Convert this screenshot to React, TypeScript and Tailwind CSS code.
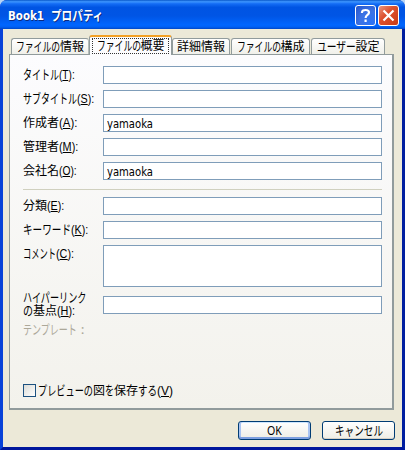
import { useLayoutEffect, useRef, useState } from "react";
import type { ReactNode } from "react";

// Text squeezed or stretched horizontally so that it occupies exactly w pixels.
function Fit({ w, children }: { w: number; children: ReactNode }) {
  const ref = useRef<HTMLSpanElement>(null);
  const [scale, setScale] = useState(1);
  useLayoutEffect(() => {
    if (ref.current) setScale(w / ref.current.offsetWidth);
  }, [w]);
  return (
    <span className="inline-flex shrink-0 whitespace-pre" style={{ width: w }}>
      <span ref={ref} className="block shrink-0 origin-left" style={{ transform: `scaleX(${scale})` }}>
        {children}
      </span>
    </span>
  );
}

type Run = [string, number];

const isKana = (t: string) => /^[\u3040-\u30ff]+$/.test(t);

function Runs({ runs }: { runs: Run[] }) {
  return (
    <span className="flex items-center">
      {runs.map(([t, w], i) => (
        <span key={i} className={isKana(t) ? "-mt-px mb-px flex text-[13px]" : "flex"}>
          <Fit w={w}>{t}</Fit>
        </span>
      ))}
    </span>
  );
}

function Key({ k, w, colon = true }: { k: string; w: number; colon?: boolean }) {
  return (
    <span className="flex font-['Liberation_Sans',sans-serif]">
      <Fit w={w}>
        (<span className="inline-block h-[13px] border-b border-black leading-[14px]">{k}</span>){colon ? ":" : ""}
      </Fit>
    </span>
  );
}

function Row({ runs, k, kw, value, tall }: { runs: Run[]; k: string; kw: number; value?: string; tall?: boolean }) {
  return (
    <div className="flex">
      <div className="flex h-[18px] w-20 shrink-0 items-center">
        <Runs runs={runs} />
        <Key k={k} w={kw} />
      </div>
      <div className={`flex w-[279px] items-center border border-[#7f9db9] bg-white pt-px pl-[3px] font-['DejaVu_Sans',sans-serif] text-[12px] ${tall ? "h-[42px]" : "h-[18px]"}`}>
        {value && <Fit w={46}>{value}</Fit>}
      </div>
    </div>
  );
}

function Tab({ runs, className }: { runs: Run[]; className: string }) {
  return (
    <div className={`flex h-4 shrink-0 items-center justify-center rounded-t-[3px] border border-b-0 border-[#919b9c] bg-linear-to-b from-white to-[#f0f0ea] pt-px ${className}`}>
      <Runs runs={runs} />
    </div>
  );
}

export default function App() {
  return (
    <div className="flex h-[450px] w-[405px] flex-col overflow-hidden bg-[#b7d4f5] font-['Noto_Sans','Noto_Sans_CJK_JP',sans-serif] text-[12px] leading-[14px] text-black">
      <div className="flex h-full flex-col overflow-hidden rounded-t-[7px] bg-[#0831d9]">
        <div className="flex h-[29px] shrink-0 items-center bg-[linear-gradient(180deg,#0958c9_0%,#3d95ff_6%,#146df5_13%,#0054e3_25%,#0055e5_55%,#0066ff_86%,#0060f4_93%,#0046c6_100%)] pr-[6px] pl-2 font-bold text-white">
          <div className="flex grow gap-[7px] pt-[3px] font-['DejaVu_Sans','Noto_Sans_CJK_JP',sans-serif] [text-shadow:1px_1px_#0b2a80]">
            <Fit w={36}>Book1</Fit>
            <span className="flex text-[13px]">
              <Fit w={52}>プロパティ</Fit>
            </span>
          </div>
          <div className="flex gap-[2px] pt-[2px]">
            <div className="flex size-[21px] items-center justify-center rounded-[3px] border border-white bg-[radial-gradient(circle_at_80%_85%,#2c73f5,#3c73e4_50%,#2554ca)]">
              <svg width="13" height="15" viewBox="0 0 13 15" fill="none" stroke="white" strokeWidth="2.2">
                <path d="M3 5V4.3C3 1.2 10 1.2 10 4.5C10 7 6.6 6.8 6.6 10" />
                <path d="M6.6 11.6V14" />
              </svg>
            </div>
            <div className="flex size-[21px] items-center justify-center rounded-[3px] border border-white bg-[linear-gradient(135deg,#e99680,#dd5230_40%,#c93b15)]">
              <svg width="13" height="13" viewBox="0 0 13 13" stroke="white" strokeWidth="2.2">
                <path d="M1.5 1.5L11.5 11.5M11.5 1.5L1.5 11.5" />
              </svg>
            </div>
          </div>
        </div>
        <div className="flex grow flex-col border-x-3 border-t-0 border-b-3 border-r-[#001ea0] border-b-[#00179c] border-l-[#0842d8] bg-[#ece9d8] pl-[6px]">
          <div className="flex h-[25px] shrink-0 items-end pl-[2px]">
            <Tab className="w-[78px] border-r-[#b5bcb9]" runs={[["ファイルの", 44], ["情報", 24]]} />
            <div className="z-10 -mb-px flex h-5 w-[83px] shrink-0 flex-col rounded-t-[3px] border-x border-t-2 border-x-[#919b9c] border-t-[#f3a024] bg-[#fcfcfe] px-[2px] pt-px">
              <div className="flex h-[16px] items-center justify-center border border-dotted border-[#333] pb-px">
                <Runs runs={[["ファイルの", 44], ["概要", 24]]} />
              </div>
            </div>
            <Tab className="w-[58px]" runs={[["詳細情報", 48]]} />
            <Tab className="ml-px w-[79px]" runs={[["ファイルの", 44], ["構成", 24]]} />
            <Tab className="ml-px w-[74px]" runs={[["ユーザー", 39], ["設定", 24]]} />
          </div>
          <div className="flex h-[356px] w-[385px] shrink-0 flex-col border border-r-2 border-b-2 border-[#919b9c] bg-linear-to-b from-[#fcfcfe] to-[#f3f2ec] pt-[11px] pl-[13px]">
            <div className="flex flex-col gap-[6px]">
              <Row runs={[["タイトル", 36]]} k="T" kw={16} />
              <Row runs={[["サブタイトル", 54]]} k="S" kw={17} />
              <Row runs={[["作成者", 36]]} k="A" kw={18} value="yamaoka" />
              <Row runs={[["管理者", 36]]} k="M" kw={19} />
              <Row runs={[["会社名", 36]]} k="O" kw={18} value="yamaoka" />
            </div>
            <div className="mt-[9px] mb-[7px] h-px w-[359px] shrink-0 bg-[#d0d0bf]" />
            <div className="flex flex-col gap-[6px]">
              <Row runs={[["分類", 24]]} k="E" kw={17} />
              <Row runs={[["キーワード", 48]]} k="K" kw={17} />
              <Row runs={[["コメント", 33]]} k="C" kw={18} tall />
            </div>
            <div className="mt-[9px] flex h-[18px]">
              <div className="-mt-1 flex w-20 flex-col">
                <div className="flex h-3 items-center">
                  <Runs runs={[["ハイパーリンク", 63]]} />
                </div>
                <div className="flex h-[13px] items-center">
                  <Runs runs={[["の", 10], ["基点", 24]]} />
                  <Key k="H" w={18} />
                </div>
              </div>
              <div className="h-[18px] w-[279px] border border-[#7f9db9] bg-white" />
            </div>
            <div className="mt-[9px] text-[#aca899]">
              <Runs runs={[["テンプレート", 54], [" :", 7]]} />
            </div>
            <div className="mt-[46px] flex h-[15px] items-center">
              <div className="mr-[2px] size-[13px] border border-[#1c5180] bg-linear-to-br from-[#dcdcd7] to-white" />
              <Runs runs={[["プレビューの", 55], ["図", 12], ["を", 9], ["保存", 24], ["する", 19]]} />
              <Key k="V" w={16} colon={false} />
            </div>
          </div>
          <div className="mt-[11px] flex justify-end gap-[11px] pr-[7px]">
            <div className="flex h-[19px] w-[73px] items-center justify-center rounded-[3px] border border-[#003c74] bg-linear-to-b from-white to-[#eeede5] shadow-[inset_0_-2px_0_#7d9fe0,inset_2px_0_0_#a9c4f2,inset_-2px_0_0_#a9c4f2,inset_0_1px_0_#cee7ff]">
              <Fit w={15}>OK</Fit>
            </div>
            <div className="flex h-[19px] w-[73px] items-center justify-center rounded-[3px] border border-[#003c74] bg-linear-to-b from-white to-[#eeede5] shadow-[inset_0_-1px_0_#d6d0c5]">
              <Runs runs={[["キャンセル", 48]]} />
            </div>
          </div>
        </div>
      </div>
    </div>
  );
}
